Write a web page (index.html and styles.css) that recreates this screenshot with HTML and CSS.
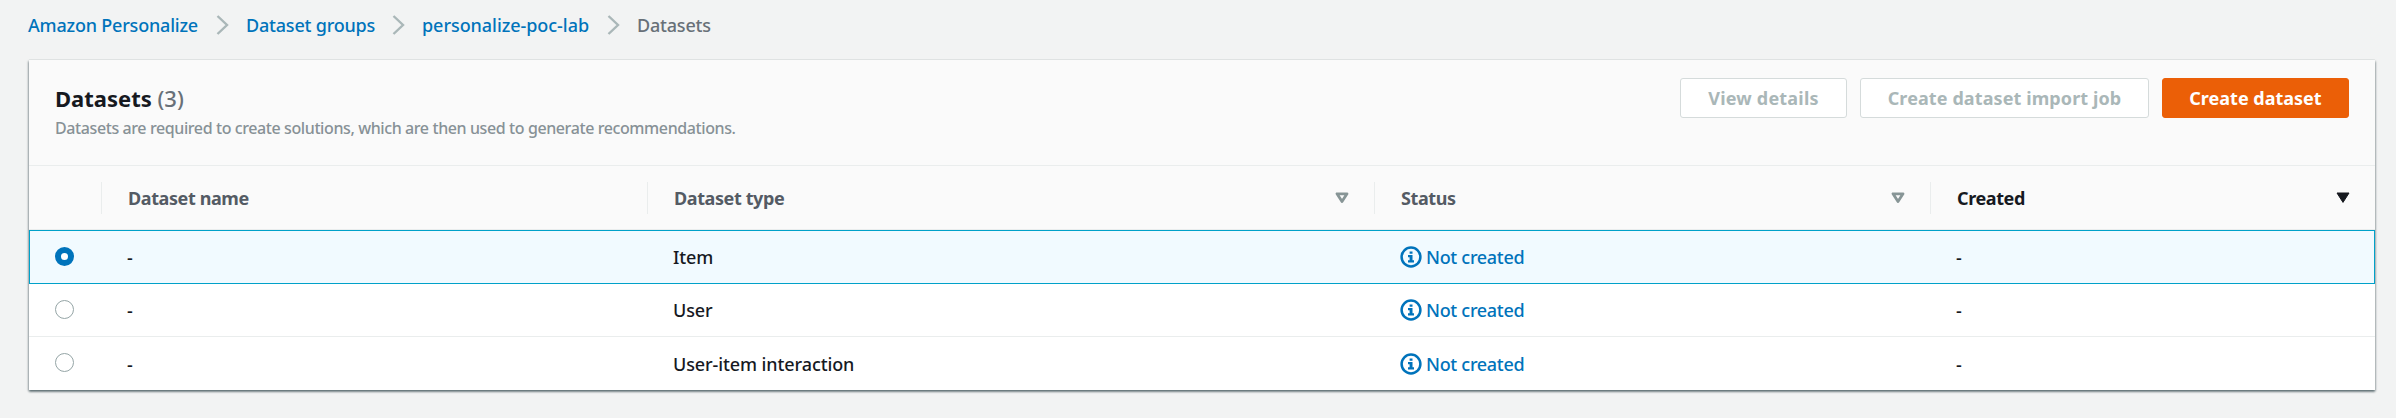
FILE: index.html
```html
<!DOCTYPE html>
<html lang="en">
<head>
<meta charset="utf-8">
<title>Datasets</title>
<link rel="stylesheet" href="styles.css">
</head>
<body>
<svg class="defs" width="0" height="0" aria-hidden="true">
  <symbol id="chevron" viewBox="0 0 13 20"><path d="M1.5 1 11 10 1.5 19" fill="none" stroke="#aab7b8" stroke-width="2.4"/></symbol>
  <symbol id="sort" viewBox="0 0 14 12"><path d="M2 1.8H12L7 9.6Z" fill="none" stroke="#879596" stroke-width="2.8" stroke-linejoin="round"/></symbol>
  <symbol id="sorted" viewBox="0 0 14 12"><path d="M1 1H13L7 10.4Z" fill="#16191f" stroke="#16191f" stroke-width="1" stroke-linejoin="round"/></symbol>
  <symbol id="info" viewBox="0 0 22 22"><circle cx="11" cy="11" r="9.4" fill="none" stroke="#0073bb" stroke-width="2.5"/><path d="M9.6 5.4h2.9v2.3H9.6zM8 9h4.5v5.2H14v2.3H8v-2.3h1.6v-2.9H8z" fill="#0073bb"/></symbol>
</svg>
<nav class="breadcrumbs">
  <a class="crumb">Amazon Personalize</a>
  <svg class="chevron"><use href="#chevron"/></svg>
  <a class="crumb">Dataset groups</a>
  <svg class="chevron"><use href="#chevron"/></svg>
  <a class="crumb crumb-lab">personalize-poc-lab</a>
  <svg class="chevron"><use href="#chevron"/></svg>
  <span class="crumb current">Datasets</span>
</nav>
<main class="panel">
  <header class="panel-header">
    <div class="heading">
      <h2 class="title">Datasets <span class="count">(3)</span></h2>
      <p class="description">Datasets are required to create solutions, which are then used to generate recommendations.</p>
    </div>
    <div class="actions">
      <button class="btn btn-view" disabled>View details</button>
      <button class="btn btn-import" disabled>Create dataset import job</button>
      <button class="btn btn-primary">Create dataset</button>
    </div>
  </header>
  <div class="grid head">
    <div class="th"></div>
    <div class="th">Dataset name</div>
    <div class="th">Dataset type<svg class="sort"><use href="#sort"/></svg></div>
    <div class="th">Status<svg class="sort"><use href="#sort"/></svg></div>
    <div class="th active">Created<svg class="sort"><use href="#sorted"/></svg></div>
  </div>
  <div class="grid row selected">
    <div class="pick"><span class="radio checked"></span></div>
    <div class="td">-</div>
    <div class="td">Item</div>
    <div class="td status"><svg class="info"><use href="#info"/></svg>Not created</div>
    <div class="td">-</div>
  </div>
  <div class="grid row">
    <div class="pick"><span class="radio"></span></div>
    <div class="td">-</div>
    <div class="td">User</div>
    <div class="td status"><svg class="info"><use href="#info"/></svg>Not created</div>
    <div class="td">-</div>
  </div>
  <div class="grid row">
    <div class="pick"><span class="radio"></span></div>
    <div class="td">-</div>
    <div class="td">User-item interaction</div>
    <div class="td status"><svg class="info"><use href="#info"/></svg>Not created</div>
    <div class="td">-</div>
  </div>
</main>
</body>
</html>
```
FILE: styles.css
```css
* { box-sizing: border-box; }
body {
  margin: 0;
  height: 418px;
  overflow: hidden;
  background: #f2f3f3;
  color: #16191f;
  font: 500 18px/26px "Noto Sans", sans-serif;
}
.defs { display: block; }
.breadcrumbs {
  display: flex;
  align-items: center;
  height: 60px;
  padding: 0 0 10px 28px;
}
.crumb { width: 172px; color: #0073bb; letter-spacing: -0.2px; white-space: nowrap; }
.chevron { width: 13px; height: 20px; margin: 0 17px 0 16px; flex: none; }
.crumb:nth-of-type(2) { width: 130px; }
.crumb-lab { width: 169px; letter-spacing: -0.05px; }
.current { width: auto; color: #687078; }
.panel {
  width: 2346px;
  height: 330px;
  margin-left: 29px;
  background: #fff;
  box-shadow: 0 2px 2px 0 rgba(0, 28, 36, .4), 1px 1px 2px 0 rgba(0, 28, 36, .2), -1px 1px 2px 0 rgba(0, 28, 36, .25), 0 -1px 0 0 #e6e9e9;
}
.panel-header {
  display: flex;
  justify-content: space-between;
  height: 105px;
  padding: 18px 26px 0 26px;
  background: #fafafa;
}
.title { margin: 5px 0 0; font-size: 22px; line-height: 30px; font-weight: 700; }
.count { color: #687078; font-weight: 500; }
.description { margin: 3px 0 0; font-size: 16px; font-weight: 500; line-height: 24px; letter-spacing: -0.4px; color: #879196; }
.actions { display: flex; gap: 13px; }
.btn {
  height: 40px;
  padding: 0;
  border: 1px solid #d5dbdb;
  border-radius: 3px;
  background: #fff;
  color: #aab7b8;
  font: 700 18px/26px "Noto Sans", sans-serif;
}
.btn-view { width: 167px; letter-spacing: .2px; }
.btn-import { width: 289px; letter-spacing: .1px; }
.btn-primary { width: 187px; background: #eb5f07; border-color: #eb5f07; color: #fff; }
.grid { display: grid; grid-template-columns: 72px 546px 727px 556px 1fr; }
.head {
  height: 65px;
  padding: 16px 0 15px;
  border-top: 1px solid #eaeded;
  border-bottom: 1px solid #eaeded;
  background: #fafafa;
}
.th {
  display: flex;
  align-items: center;
  justify-content: space-between;
  padding: 0 25px 0 26px;
  border-left: 1px solid #eaeded;
  color: #545b64;
  font-weight: 700;
  letter-spacing: -0.4px;
}
.th:first-child { border-left-color: transparent; }
.th.active { color: #16191f; }
.sort { width: 14px; height: 12px; }
.row { height: 53px; border: solid #eaeded; border-width: 0 0 1px; }
.row.selected { height: 54px; border: 1px solid #00a1c9; background: #f1faff; }
.selected .td { margin-left: -1px; }
.row:last-child { border-bottom: 0; }
.td { display: flex; align-items: center; padding-left: 26px; letter-spacing: -0.1px; }
.pick { padding: 16px 0 0 26px; }
.selected .pick { padding-left: 25px; }
.radio { display: block; width: 19px; height: 19px; border: 1.5px solid #95a5a6; border-radius: 50%; background: #fff; }
.radio.checked { border: 6px solid #0073bb; }
.status { color: #0073bb; letter-spacing: -0.3px; }
.info { width: 22px; height: 22px; margin: 0 4px 0 0; }
```
